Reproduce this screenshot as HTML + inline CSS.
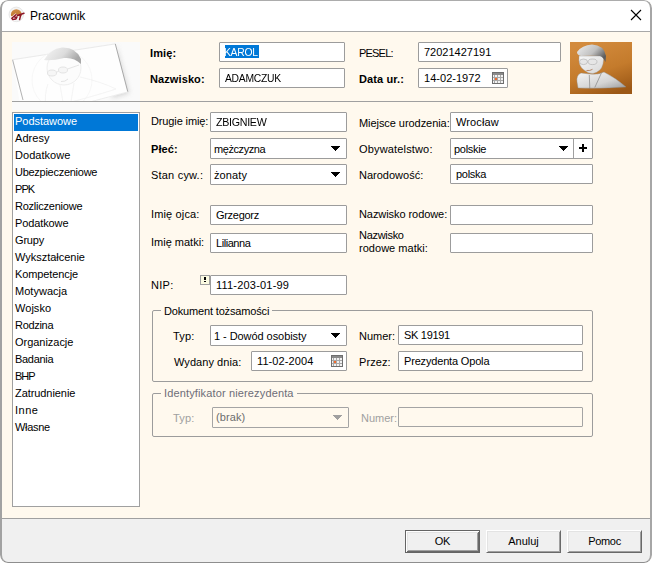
<!DOCTYPE html>
<html><head><meta charset="utf-8">
<style>
*{box-sizing:border-box;margin:0;padding:0}
html,body{width:652px;height:563px;overflow:hidden;background:#fff}
body{position:relative;font-family:"Liberation Sans",sans-serif;font-size:11px;color:#000;letter-spacing:-0.3px}
.a{position:absolute}
.win{left:0;top:0;width:652px;height:563px;border-radius:8px;background:#fff9ee;overflow:hidden}
.t{position:absolute;white-space:nowrap;line-height:13px}
.b{font-weight:bold;letter-spacing:0.1px}
.in{position:absolute;background:#fff;border:1px solid #9c9c9c;border-radius:1px}
.in .v{position:absolute;left:5px;top:3px;white-space:nowrap;line-height:13px}
.arr{position:absolute;width:0;height:0;border-left:4.5px solid transparent;border-right:4.5px solid transparent;border-top:5px solid #000}
.btn{position:absolute;top:530px;width:75px;height:23px;background:#f0f0f0;border-style:solid;border-width:1px;border-color:#fff #696969 #696969 #fff;box-shadow:inset 1px 1px 0 #e3e3e3,inset -1px -1px 0 #a0a0a0;text-align:center;line-height:20px;font-size:11px}
.grp{position:absolute;border:1px solid #9c9c9c;border-radius:2px}
.gc{position:absolute;background:#fff9ee;padding:0 3px;white-space:nowrap;line-height:13px}
.dis{color:#a0a0a0}
.cal{position:absolute;width:12px;height:12px}
</style></head><body>
<div class="a win">
  <!-- title bar -->
  <div class="a" style="left:0;top:0;width:652px;height:31px;background:#fff"></div>
  <div class="a" style="left:0;top:31px;width:652px;height:1px;background:#a8a8a8"></div>
  <svg class="a" style="left:8px;top:6px" width="18" height="18" viewBox="0 0 18 18">
    <defs><linearGradient id="ig" x1="0" y1="0" x2="0" y2="1"><stop offset="0" stop-color="#d08a45"/><stop offset="1" stop-color="#b8702a"/></linearGradient>
    <clipPath id="ic"><rect x="0" y="0" width="18" height="10.2"/></clipPath></defs>
    <circle cx="8.3" cy="8.4" r="7.3" fill="#f4f4f4" stroke="#e2e2e2" stroke-width="0.8"/>
    <circle cx="8.3" cy="8.6" r="5.4" fill="url(#ig)" clip-path="url(#ic)"/>
    <path d="M8.5 8.2 L3.8 12.2 L4.8 13.4 L8 13 L9 11 L6.4 11.4" stroke="#fff" stroke-width="2.6" fill="none" opacity="0.9"/>
    <path d="M8.5 8.2 L3.8 12.2 L4.8 13.4 L8 13 L9 11 L6.4 11.4" stroke="#8c1626" stroke-width="1.5" fill="none" stroke-linejoin="round"/>
    <path d="M9.5 9.5 L16 7.3 M12.8 8.6 L11.6 13.6" stroke="#8c1626" stroke-width="1.5" fill="none" stroke-linecap="round"/>
  </svg>
  <div class="t" style="left:30px;top:9px;font-size:12px;letter-spacing:0;color:#000;line-height:15px">Pracownik</div>
  <svg class="a" style="left:630px;top:9px" width="12" height="12" viewBox="0 0 12 12"><path d="M1 1 L11 11 M11 1 L1 11" stroke="#000" stroke-width="1.1"/></svg>

  <!-- bottom panel -->
  <div class="a" style="left:0;top:518px;width:652px;height:1px;background:#a0a0a0"></div>
  <div class="a" style="left:0;top:519px;width:652px;height:44px;background:#f0f0f0"></div>
  <div class="btn" style="left:405px;border-color:#646464;box-shadow:inset 1px 1px 0 #fff,inset -1px -1px 0 #696969,inset 2px 2px 0 #e3e3e3,inset -2px -2px 0 #a0a0a0">OK</div>
  <div class="btn" style="left:486px;letter-spacing:0.02px">Anuluj</div>
  <div class="btn" style="left:567px">Pomoc</div>

  <!-- header card image -->
  <div class="a" style="left:12px;top:42px;width:128px;height:68px;background:#fafafa"></div>
  <svg class="a" style="left:12px;top:42px" width="128" height="59" viewBox="0 0 128 59">
    <defs>
      <linearGradient id="hair" x1="0" y1="0" x2="1" y2="0.4"><stop offset="0" stop-color="#f6f6f6"/><stop offset="0.6" stop-color="#dcdcdc"/><stop offset="1" stop-color="#a8a8a8"/></linearGradient>
      <filter id="blr" x="-50%" y="-50%" width="200%" height="200%"><feGaussianBlur stdDeviation="2.5"/></filter>
    </defs>
    <path d="M104 3 L117 51 L100 56 Z" fill="#c8c8c8" filter="url(#blr)" opacity="0.8"/>
    <path d="M0.6 17.7 L103.3 1.9 L115.8 49.9 L11 80 Z" fill="#fefefe"/>
    <path d="M0.6 17.7 L11 58" stroke="#a8a8a8" stroke-width="0.9" fill="none"/>
    <path d="M0.6 17.7 L103.3 1.9" stroke="#e4e4e4" stroke-width="0.8" fill="none"/>
    <path d="M103.3 1.9 L115.8 49.9" stroke="#a0a0a0" stroke-width="0.9" fill="none"/>
    <path d="M115.8 49.9 L40 70" stroke="#e8e8e8" stroke-width="0.8" fill="none"/>
    <circle cx="50" cy="38" r="30" fill="none" stroke="#f3f3f3" stroke-width="0.7"/>
    <circle cx="52" cy="26" r="17" fill="#fcfcfc" stroke="#e6e6e6" stroke-width="0.7"/>
    <path d="M32 18 Q38 7 50 5.5 Q64 5 69 17 L69 22 Q62 15 52 16 Q40 19 32 18 Z" fill="url(#hair)"/>
    <ellipse cx="40" cy="31" rx="4.5" ry="3" fill="#f6f6f6" stroke="#dedede" stroke-width="0.8"/>
    <ellipse cx="51" cy="28" rx="4.5" ry="3" fill="#f6f6f6" stroke="#dedede" stroke-width="0.8"/>
    <path d="M44.5 30 L46.5 29.5 M55.5 27 L67 23" stroke="#dedede" stroke-width="0.8"/>
    <path d="M49 39.5 Q53 40 56 37" stroke="#e0e0e0" stroke-width="0.9" fill="none"/>
    <path d="M68 35 Q90 40 104 47 Q80 55 36 66 M36 42 Q32 52 34 66 M48 43 L52 66 M62 41 L58 66" stroke="#efefef" stroke-width="0.7" fill="none"/>
  </svg>
  <div class="a" style="left:12px;top:101px;width:581px;height:1px;background:#a0a0a0"></div>

  <div class="t b" style="left:150px;top:47px">Imię:</div>
  <div class="t b" style="left:150px;top:73px">Nazwisko:</div>
  <div class="in" style="left:219px;top:42px;width:126px;height:20px"><div class="a" style="left:5px;top:2px;width:34px;height:13px;background:#0078d7"></div><div class="v" style="color:#fff;left:4px;transform:scaleX(0.94);transform-origin:0 0">KAROL</div></div>
  <div class="in" style="left:219px;top:68px;width:126px;height:20px"><div class="v" style="letter-spacing:-0.3px;transform:scaleX(0.94);transform-origin:0 0">ADAMCZUK</div></div>
  <div class="t" style="left:359px;top:47px;letter-spacing:-0.8px">PESEL:</div>
  <div class="t b" style="left:359px;top:73px">Data ur.:</div>
  <div class="in" style="left:418px;top:42px;width:143px;height:20px"><div class="v" style="letter-spacing:0px">72021427191</div></div>
  <div class="in" style="left:418px;top:68px;width:90px;height:20px"><div class="v" style="letter-spacing:0.03px">14-02-1972</div>
    <svg class="cal" style="left:73px;top:3px" viewBox="0 0 12 12" shape-rendering="crispEdges"><rect x="0" y="0" width="12" height="12" fill="#6e6e6e"/><rect x="1" y="1" width="10" height="10" fill="#a8a8a8"/><rect x="1" y="1" width="10" height="2" fill="#8a8a8a"/><g fill="#f2f2f2"><rect x="1" y="3" width="1" height="2"/><rect x="1" y="6" width="1" height="2"/><rect x="1" y="9" width="1" height="2"/><rect x="3" y="3" width="2" height="2"/><rect x="6" y="3" width="2" height="2"/><rect x="9" y="3" width="2" height="2"/><rect x="6" y="6" width="2" height="2"/><rect x="9" y="6" width="2" height="2"/><rect x="3" y="9" width="2" height="2"/><rect x="6" y="9" width="2" height="2"/><rect x="9" y="9" width="2" height="2"/></g><rect x="3" y="6" width="2" height="2" fill="#f26b2e"/></svg>
  </div>
  <!-- photo -->
  <svg class="a" style="left:570px;top:42px" width="62" height="52" viewBox="0 0 62 52">
    <defs>
      <linearGradient id="og" x1="0.3" y1="0" x2="0.7" y2="1"><stop offset="0" stop-color="#d38b3d"/><stop offset="0.55" stop-color="#c47b2c"/><stop offset="1" stop-color="#9c5816"/></linearGradient>
      <linearGradient id="sg" x1="0" y1="0" x2="1" y2="1"><stop offset="0" stop-color="#f6f6f6"/><stop offset="0.6" stop-color="#d4d4d4"/><stop offset="1" stop-color="#9a9a9a"/></linearGradient>
      <linearGradient id="hg" x1="0" y1="0" x2="1" y2="0.6"><stop offset="0" stop-color="#f0f0f0"/><stop offset="0.6" stop-color="#c0c0c0"/><stop offset="1" stop-color="#5c5c5c"/></linearGradient>
      <linearGradient id="fg" x1="0" y1="0" x2="1" y2="1"><stop offset="0" stop-color="#f8f8f8"/><stop offset="1" stop-color="#d6d6d6"/></linearGradient>
    </defs>
    <rect width="62" height="52" fill="url(#og)"/>
    <path d="M11 31 Q6 33 7 40 L8 46 Q30 47 56 45 Q46 36 34 30 Q28 33 20 32 Z" fill="url(#sg)" stroke="#888" stroke-width="0.4"/>
    <path d="M19.3 33 L19.8 46.5 M31.4 31 L24.8 45.5" stroke="#777" stroke-width="0.6" fill="none"/>
    <path d="M9 14 Q8 24 14 28 Q19 32 23 31.5 Q31 30 33 22 L34 14 Z" fill="url(#fg)" stroke="#999" stroke-width="0.4"/>
    <path d="M7 10 Q12 3 22 2.5 Q34 3 36 14 L35.5 20 Q33 15 30 14 Q20 13.5 11 14 Q7 13 7 10 Z" fill="url(#hg)"/>
    <ellipse cx="13.5" cy="19.8" rx="4" ry="2.8" fill="#e6e6e6" stroke="#a0a0a0" stroke-width="0.5"/>
    <ellipse cx="22.5" cy="19.8" rx="4.5" ry="2.8" fill="#e6e6e6" stroke="#a0a0a0" stroke-width="0.5"/>
    <path d="M16.5 28.5 Q20 29 22.5 27.3" stroke="#b08060" stroke-width="0.9" fill="none"/>
  </svg>

  <!-- list -->
  <div class="a" style="left:12px;top:112px;width:128px;height:395px;background:#fff;border:1px solid #a0a0a0"></div>
  <div class="a" style="left:14px;top:114px;width:124px;height:17px;background:#0078d7"></div>
  <div class="a" id="list" style="left:15px;top:113px;line-height:17px;white-space:nowrap">
    <div style="color:#fff;letter-spacing:-0.03px">Podstawowe</div><div style="letter-spacing:0.06px">Adresy</div><div style="letter-spacing:0.04px">Dodatkowe</div><div style="letter-spacing:-0.27px">Ubezpieczeniowe</div><div style="letter-spacing:-0.9px">PPK</div><div style="letter-spacing:-0.23px">Rozliczeniowe</div><div style="letter-spacing:-0.11px">Podatkowe</div><div style="letter-spacing:-0.18px">Grupy</div><div style="letter-spacing:-0.02px">Wykształcenie</div><div style="letter-spacing:-0.11px">Kompetencje</div><div style="letter-spacing:0.02px">Motywacja</div><div style="letter-spacing:0.04px">Wojsko</div><div style="letter-spacing:-0.3px">Rodzina</div><div style="letter-spacing:-0.03px">Organizacje</div><div style="letter-spacing:-0.3px">Badania</div><div style="letter-spacing:-1.0px">BHP</div><div style="letter-spacing:-0.07px">Zatrudnienie</div><div style="letter-spacing:0.5px">Inne</div><div>Własne</div>
  </div>

  <!-- col 1 -->
  <div class="t" style="left:151px;top:115px;letter-spacing:-0.12px">Drugie imię:</div>
  <div class="t b" style="left:151px;top:143px">Płeć:</div>
  <div class="t" style="left:151px;top:169px;letter-spacing:0.2px">Stan cyw.:</div>
  <div class="t" style="left:151px;top:208px;letter-spacing:0.14px">Imię ojca:</div>
  <div class="t" style="left:151px;top:236px;letter-spacing:0px">Imię matki:</div>
  <div class="t" style="left:151px;top:279px;letter-spacing:0.3px">NIP:</div>
  <div class="in" style="left:210px;top:112px;width:137px;height:20px"><div class="v" style="letter-spacing:-0.3px;transform:scaleX(0.97);transform-origin:0 0">ZBIGNIEW</div></div>
  <div class="in" style="left:210px;top:138px;width:137px;height:21px"><div class="v" style="left:3px;top:4px;letter-spacing:-0.42px">mężczyzna</div><svg class="a" style="left:120px;top:7px" width="9" height="5" shape-rendering="crispEdges"><g fill="#000"><rect x="0" y="0" width="9" height="1"/><rect x="1" y="1" width="7" height="1"/><rect x="2" y="2" width="5" height="1"/><rect x="3" y="3" width="3" height="1"/><rect x="4" y="4" width="1" height="1"/></g></svg></div>
  <div class="in" style="left:210px;top:164px;width:137px;height:21px"><div class="v" style="left:3px;top:4px;letter-spacing:0.1px">żonaty</div><svg class="a" style="left:120px;top:7px" width="9" height="5" shape-rendering="crispEdges"><g fill="#000"><rect x="0" y="0" width="9" height="1"/><rect x="1" y="1" width="7" height="1"/><rect x="2" y="2" width="5" height="1"/><rect x="3" y="3" width="3" height="1"/><rect x="4" y="4" width="1" height="1"/></g></svg></div>
  <div class="in" style="left:210px;top:205px;width:137px;height:20px"><div class="v">Grzegorz</div></div>
  <div class="in" style="left:210px;top:233px;width:137px;height:20px"><div class="v" style="letter-spacing:-0.44px">Lilianna</div></div>
  <div class="a" style="left:200px;top:275px;width:10px;height:10px;background:#fcfbe2;border:1px solid #a0a0a0"></div>
  <div class="a" style="left:204px;top:277px;width:2px;height:3px;background:#000"></div>
  <div class="a" style="left:204px;top:281px;width:2px;height:1px;background:#000"></div>
  <div class="in" style="left:210px;top:275px;width:137px;height:20px"><div class="v" style="letter-spacing:0.2px">111-203-01-99</div></div>

  <!-- col 2 -->
  <div class="t" style="left:359px;top:117px;letter-spacing:-0.06px">Miejsce urodzenia:</div>
  <div class="t" style="left:359px;top:143px;letter-spacing:0.16px">Obywatelstwo:</div>
  <div class="t" style="left:359px;top:169px;letter-spacing:0px">Narodowość:</div>
  <div class="t" style="left:359px;top:208px;letter-spacing:-0.07px">Nazwisko rodowe:</div>
  <div class="t" style="left:359px;top:229px">Nazwisko</div>
  <div class="t" style="left:359px;top:242px;letter-spacing:0.03px">rodowe matki:</div>
  <div class="in" style="left:450px;top:112px;width:143px;height:20px"><div class="v" style="letter-spacing:0.12px">Wrocław</div></div>
  <div class="in" style="left:450px;top:138px;width:143px;height:21px"><div class="v" style="left:3px;top:4px">polskie</div><svg class="a" style="left:108px;top:7px" width="9" height="5" shape-rendering="crispEdges"><g fill="#000"><rect x="0" y="0" width="9" height="1"/><rect x="1" y="1" width="7" height="1"/><rect x="2" y="2" width="5" height="1"/><rect x="3" y="3" width="3" height="1"/><rect x="4" y="4" width="1" height="1"/></g></svg>
    <div class="a" style="left:122px;top:0;width:1px;height:19px;background:#a0a0a0"></div>
    <div class="a" style="left:128px;top:8px;width:8px;height:2px;background:#000"></div><div class="a" style="left:131px;top:5px;width:2px;height:8px;background:#000"></div>
  </div>
  <div class="in" style="left:450px;top:164px;width:143px;height:20px"><div class="v">polska</div></div>
  <div class="in" style="left:450px;top:205px;width:143px;height:20px"></div>
  <div class="in" style="left:450px;top:233px;width:143px;height:20px"></div>

  <!-- group 1 -->
  <div class="grp" style="left:152px;top:310px;width:441px;height:72px"></div>
  <div class="gc" style="left:161px;top:305px;letter-spacing:-0.16px">Dokument tożsamości</div>
  <div class="t" style="left:173px;top:330px;letter-spacing:0.2px">Typ:</div>
  <div class="t" style="left:174px;top:356px;letter-spacing:0.06px">Wydany dnia:</div>
  <div class="in" style="left:210px;top:325px;width:137px;height:21px"><div class="v" style="left:3px;top:4px;letter-spacing:-0.06px">1 - Dowód osobisty</div><svg class="a" style="left:120px;top:7px" width="9" height="5" shape-rendering="crispEdges"><g fill="#000"><rect x="0" y="0" width="9" height="1"/><rect x="1" y="1" width="7" height="1"/><rect x="2" y="2" width="5" height="1"/><rect x="3" y="3" width="3" height="1"/><rect x="4" y="4" width="1" height="1"/></g></svg></div>
  <div class="in" style="left:251px;top:351px;width:96px;height:20px"><div class="v" style="letter-spacing:0.09px">11-02-2004</div>
    <svg class="cal" style="left:79px;top:3px" viewBox="0 0 12 12" shape-rendering="crispEdges"><rect x="0" y="0" width="12" height="12" fill="#6e6e6e"/><rect x="1" y="1" width="10" height="10" fill="#a8a8a8"/><rect x="1" y="1" width="10" height="2" fill="#8a8a8a"/><g fill="#f2f2f2"><rect x="1" y="3" width="1" height="2"/><rect x="1" y="6" width="1" height="2"/><rect x="1" y="9" width="1" height="2"/><rect x="3" y="3" width="2" height="2"/><rect x="6" y="3" width="2" height="2"/><rect x="9" y="3" width="2" height="2"/><rect x="6" y="6" width="2" height="2"/><rect x="9" y="6" width="2" height="2"/><rect x="3" y="9" width="2" height="2"/><rect x="6" y="9" width="2" height="2"/><rect x="9" y="9" width="2" height="2"/></g><rect x="3" y="6" width="2" height="2" fill="#f26b2e"/></svg>
  </div>
  <div class="t" style="left:359px;top:330px;letter-spacing:0px">Numer:</div>
  <div class="t" style="left:359px;top:356px;letter-spacing:0.1px">Przez:</div>
  <div class="in" style="left:398px;top:325px;width:185px;height:20px"><div class="v">SK 19191</div></div>
  <div class="in" style="left:398px;top:351px;width:185px;height:20px"><div class="v" style="letter-spacing:-0.17px">Prezydenta Opola</div></div>

  <!-- group 2 -->
  <div class="grp" style="left:152px;top:393px;width:441px;height:44px"></div>
  <div class="gc" style="color:#6d6d78;left:161px;top:387px;letter-spacing:0.14px">Identyfikator nierezydenta</div>
  <div class="t dis" style="left:173px;top:412px;letter-spacing:0.2px">Typ:</div>
  <div class="in" style="left:212px;top:407px;width:137px;height:21px;background:#fff9ee;border-color:#a4a4a4"><div class="v" style="color:#6d6d6d;left:3px;top:3px;letter-spacing:0.1px">(brak)</div><svg class="a" style="left:120px;top:7px" width="9" height="5" shape-rendering="crispEdges"><g fill="#a0a0a0"><rect x="0" y="0" width="9" height="1"/><rect x="1" y="1" width="7" height="1"/><rect x="2" y="2" width="5" height="1"/><rect x="3" y="3" width="3" height="1"/><rect x="4" y="4" width="1" height="1"/></g></svg></div>
  <div class="t dis" style="left:361px;top:412px;letter-spacing:0px">Numer:</div>
  <div class="in" style="left:398px;top:407px;width:185px;height:20px;background:#fff9ee;border-color:#a4a4a4"></div>

  <!-- window border -->
  <div class="a" style="left:0;top:0;width:652px;height:563px;border-style:solid;border-color:#acacac #a6a6a6 #8e8e8e #a2a2a2;border-width:1px 2px 1px 2px;border-radius:8px"></div>
</div>
</body></html>
